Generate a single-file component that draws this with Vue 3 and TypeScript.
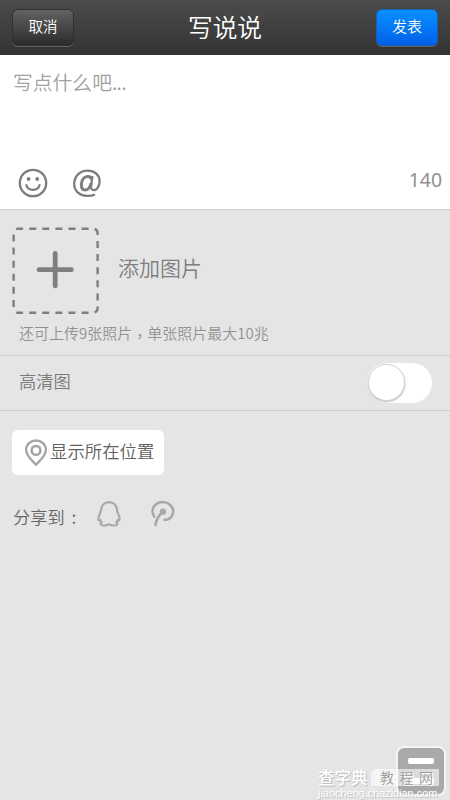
<script setup lang="ts">
import { ref } from 'vue'

const limit = 140
const hd = ref(false)
</script>

<template>
  <main class="page">
    <header class="bar">
      <button class="btn cancel">取消</button>
      <h1 class="title">写说说</h1>
      <button class="btn publish">发表</button>
    </header>

    <section class="compose">
      <p class="placeholder">写点什么吧<span class="dots">...</span></p>
      <div class="tools">
        <svg class="smile" width="30" height="30" viewBox="0 0 30 30" fill="none" stroke="#7d7d7d">
          <circle cx="15" cy="15" r="13.2" stroke-width="2.3" />
          <circle cx="10.6" cy="11" r="1.9" fill="#7d7d7d" stroke="none" />
          <circle cx="19.2" cy="11" r="1.9" fill="#7d7d7d" stroke="none" />
          <path d="M8.3 17.1c1.6 6.3 11.7 6.3 13.3 0" stroke-width="2.2" stroke-linecap="round" />
        </svg>
        <svg class="at" width="30" height="30" viewBox="0 0 30 30" fill="none" stroke="#7d7d7d" stroke-width="2.3">
          <path d="M22.9 26.6C20.2 27.7 17.6 28 14.8 27.8C7.2 27.4 2.2 22.8 2.2 16C2.2 8.2 8 2.6 15.6 2.6C22.9 2.6 27.6 7 27.6 13.3C27.6 18.3 25 22.1 21.8 22.1C19.7 22.1 18.7 20.6 19.1 17.8L20.4 8" />
          <path d="M19.6 11.4C18.8 9.2 17.2 8.3 15.3 8.6C11.5 9 9.4 12.6 9.4 16.8C9.4 20.1 10.7 22 13 22C16.3 22 18.5 18.6 19.1 15" stroke-width="3" />
        </svg>
        <span class="count">{{ limit }}</span>
      </div>
    </section>

    <section class="photos">
      <div class="add">
        <svg width="88" height="88" viewBox="0 0 88 88" fill="none" stroke="#7f7f7f">
          <rect x="1.6" y="1.7" width="84" height="84" rx="4.5" stroke-width="2.4" stroke-dasharray="7 6.1" stroke-dashoffset="2" />
          <path d="M27 42.7h32.4M43.2 26.5v32.4" stroke-width="4.8" stroke-linecap="round" />
        </svg>
        <span class="add-label">添加图片</span>
      </div>
      <p class="hint">还可上传9张照片<span class="comma">，</span>单张照片最大10兆</p>
    </section>

    <section class="quality">
      <span>高清图</span>
      <button class="switch" :class="{ on: hd }" aria-label="高清图" @click="hd = !hd"><i class="knob"></i></button>
    </section>

    <button class="location">
      <svg width="24" height="28" viewBox="0 0 24 28" fill="none" stroke="#a5a5a5" stroke-width="2.3">
        <path d="M12 25.8C10 23 2.1 17.3 2.1 10.9C2.1 5.3 6.6 1.5 12 1.5S21.9 5.3 21.9 10.9C21.9 17.3 14 23 12 25.8Z" stroke-linejoin="round" />
        <circle cx="12" cy="11.4" r="4.4" stroke-width="2.6" />
      </svg>
      <span>显示所在位置</span>
    </button>

    <div class="share">
      <span class="share-label">分享到<b class="colon">:</b></span>
      <svg class="qq" width="26" height="28" viewBox="0 0 26 28" fill="none" stroke="#a8a8a8" stroke-width="2.2" stroke-linecap="round" stroke-linejoin="round">
        <path d="M13 2.2C8.1 2.2 5.3 5.7 5.1 10C5.1 12.2 2.5 15.1 2.4 18.7C2.4 20.5 3.1 20.8 4.5 20C4.6 21 5 21.7 5.6 22.2C3.5 24.2 5 25.5 8.1 25.5C10.6 25.5 11.1 24.4 13 24.4S15.4 25.5 17.9 25.5C21 25.5 22.5 24.2 20.4 22.2C21 21.7 21.4 21 21.5 20C22.9 20.8 23.6 20.5 23.6 18.7C23.5 15.1 20.9 12.2 20.9 10C20.7 5.7 17.9 2.2 13 2.2Z" />
      </svg>
      <svg class="weibo" width="26" height="28" viewBox="0 0 26 28" fill="none" stroke="#a8a8a8" stroke-width="2.5" stroke-linecap="round">
        <path d="M4.2 16.7C1.3 11.8 2.3 7 6 4.2C10.6.8 17.2 1.6 20.8 5.6C25.8 11.2 22.2 20.1 14.5 19.8" />
        <circle cx="13" cy="11.6" r="3.2" fill="#a8a8a8" stroke="none" />
        <path d="M12.7 12C8.2 15.8 6.1 19.8 5.5 25" stroke-width="2.7" />
      </svg>
    </div>

    <div class="panel"><i></i><i></i></div>
    <div class="mark">
      <div class="mark-row"><span class="mark-name">查字典</span><span class="mark-tag">教程网</span></div>
      <div class="mark-url">jiaocheng.chazidian.com</div>
    </div>
  </main>
</template>

<style>
body {
  margin: 0;
  background: #e5e5e5;
}
</style>

<style scoped>
* {
  box-sizing: border-box;
}
.page {
  position: relative;
  width: 450px;
  height: 800px;
  overflow: hidden;
  background: #e5e5e5;
  font-family: "Noto Sans CJK SC", sans-serif;
  font-weight: 350;
}
button {
  font: inherit;
  padding: 0;
  border: 0;
}
p, h1 {
  margin: 0;
}
.bar {
  height: 55px;
  padding: 9px 12px 0;
  display: flex;
  justify-content: space-between;
  background: linear-gradient(#4c4c4c, #333);
}
.btn {
  width: 62px;
  height: 37px;
  border-radius: 6px;
  color: #fff;
  font-size: 14.5px;
  line-height: 32px;
  padding-bottom: 3px;
}
.cancel {
  border: 1px solid #303030;
  background: linear-gradient(#626262, #2c2c2c);
  box-shadow: 0 1px 0 #636363;
}
.publish {
  border: 1px solid #1262b8;
  background: linear-gradient(#0b90ff, #0060e8);
  box-shadow: 0 1px 0 #636363;
  font-size: 15px;
}
.title {
  height: 37px;
  color: #fff;
  font-size: 24.7px;
  line-height: 34px;
  font-weight: 350;
}
.compose {
  height: 155px;
  padding: 12px 8px 0 13px;
  background: #fff;
  border-bottom: 1px solid #cfcfcf;
}
.placeholder {
  height: 30px;
  color: #a0a0a0;
  font-size: 19.8px;
  line-height: 30px;
}
.dots {
  letter-spacing: -.7px;
}
.tools {
  display: flex;
  align-items: flex-start;
  padding: 71px 0 0 5px;
}
.at {
  margin-left: 24px;
}
.count {
  margin: 0 0 0 auto;
  color: #8f8f8f;
  font: 400 19.4px/24px "Noto Sans", sans-serif;
}
.photos {
  height: 146px;
  padding: 17px 12px 0;
  border-bottom: 1px solid #cecece;
}
.add {
  display: flex;
}
.add-label {
  margin-left: 18px;
  color: #7e7e7e;
  font-size: 21px;
  line-height: 80px;
}
.hint {
  padding-left: 7px;
  margin-top: 7px;
  color: #929292;
  font-size: 15px;
  line-height: 22px;
  white-space: nowrap;
}
.comma {
  font-family: "Noto Sans CJK TC", sans-serif;
  line-height: 1;
  vertical-align: -3px;
}
.quality {
  height: 55px;
  padding: 0 18px 0 19px;
  display: flex;
  justify-content: space-between;
  border-bottom: 1px solid #cecece;
  color: #7a7a7a;
  font-size: 17.3px;
  line-height: 50px;
}
.switch {
  width: 65px;
  height: 40px;
  margin-top: 7px;
  padding: 1px;
  display: flex;
  border-radius: 20px;
  background: #fff;
}
.switch.on {
  justify-content: flex-end;
}
.knob {
  width: 37px;
  height: 37px;
  border-radius: 50%;
  border: 1px solid #d5d5d5;
  background: #fff;
  box-shadow: 0 1px 2px #b0b0b0;
}
.location {
  width: 152px;
  height: 45px;
  margin: 19px 0 0 12px;
  padding-left: 12px;
  display: flex;
  align-items: center;
  border-radius: 6px;
  background: #fff;
  color: #606060;
  font-size: 17.4px;
}
.location span {
  margin-left: 2px;
  line-height: 42px;
  height: 45px;
  white-space: nowrap;
}
.share {
  display: flex;
  padding: 25px 0 0 13px;
  color: #666;
  font-size: 17.2px;
}
.share-label {
  width: 83px;
  line-height: 34px;
  white-space: nowrap;
}
.colon {
  margin-left: 7px;
  font-weight: 400;
}
.weibo {
  margin-left: 28px;
}
.panel {
  position: absolute;
  left: 396px;
  top: 746px;
  width: 50px;
  height: 50px;
  padding: 10px 9px;
  display: flex;
  flex-direction: column;
  align-items: center;
  gap: 14px;
  border: 2px solid #f4f4f4;
  border-radius: 8px;
  background: #a9a9a9;
}
.panel i {
  flex: none;
  width: 26px;
  height: 6px;
  border-radius: 2px;
  background: #fff;
}
.mark {
  position: absolute;
  left: 318px;
  top: 769px;
  color: #fff;
  text-shadow: 1px 1px 1px #b8b8b8;
}
.mark-row {
  display: flex;
  height: 18px;
}
.mark-name {
  width: 53px;
  font-size: 16.5px;
  line-height: 17px;
  font-weight: 500;
}
.mark-tag {
  width: 68px;
  height: 17px;
  padding-left: 9px;
  border-radius: 6px 0 0 0;
  background: rgba(255, 255, 255, .6);
  color: #999;
  font-size: 14px;
  line-height: 17px;
  letter-spacing: 5.5px;
  white-space: nowrap;
  text-shadow: 1px 1px 0 #fff;
}
.mark-url {
  font: 400 10.9px/12px "Liberation Sans", sans-serif;
}
</style>
